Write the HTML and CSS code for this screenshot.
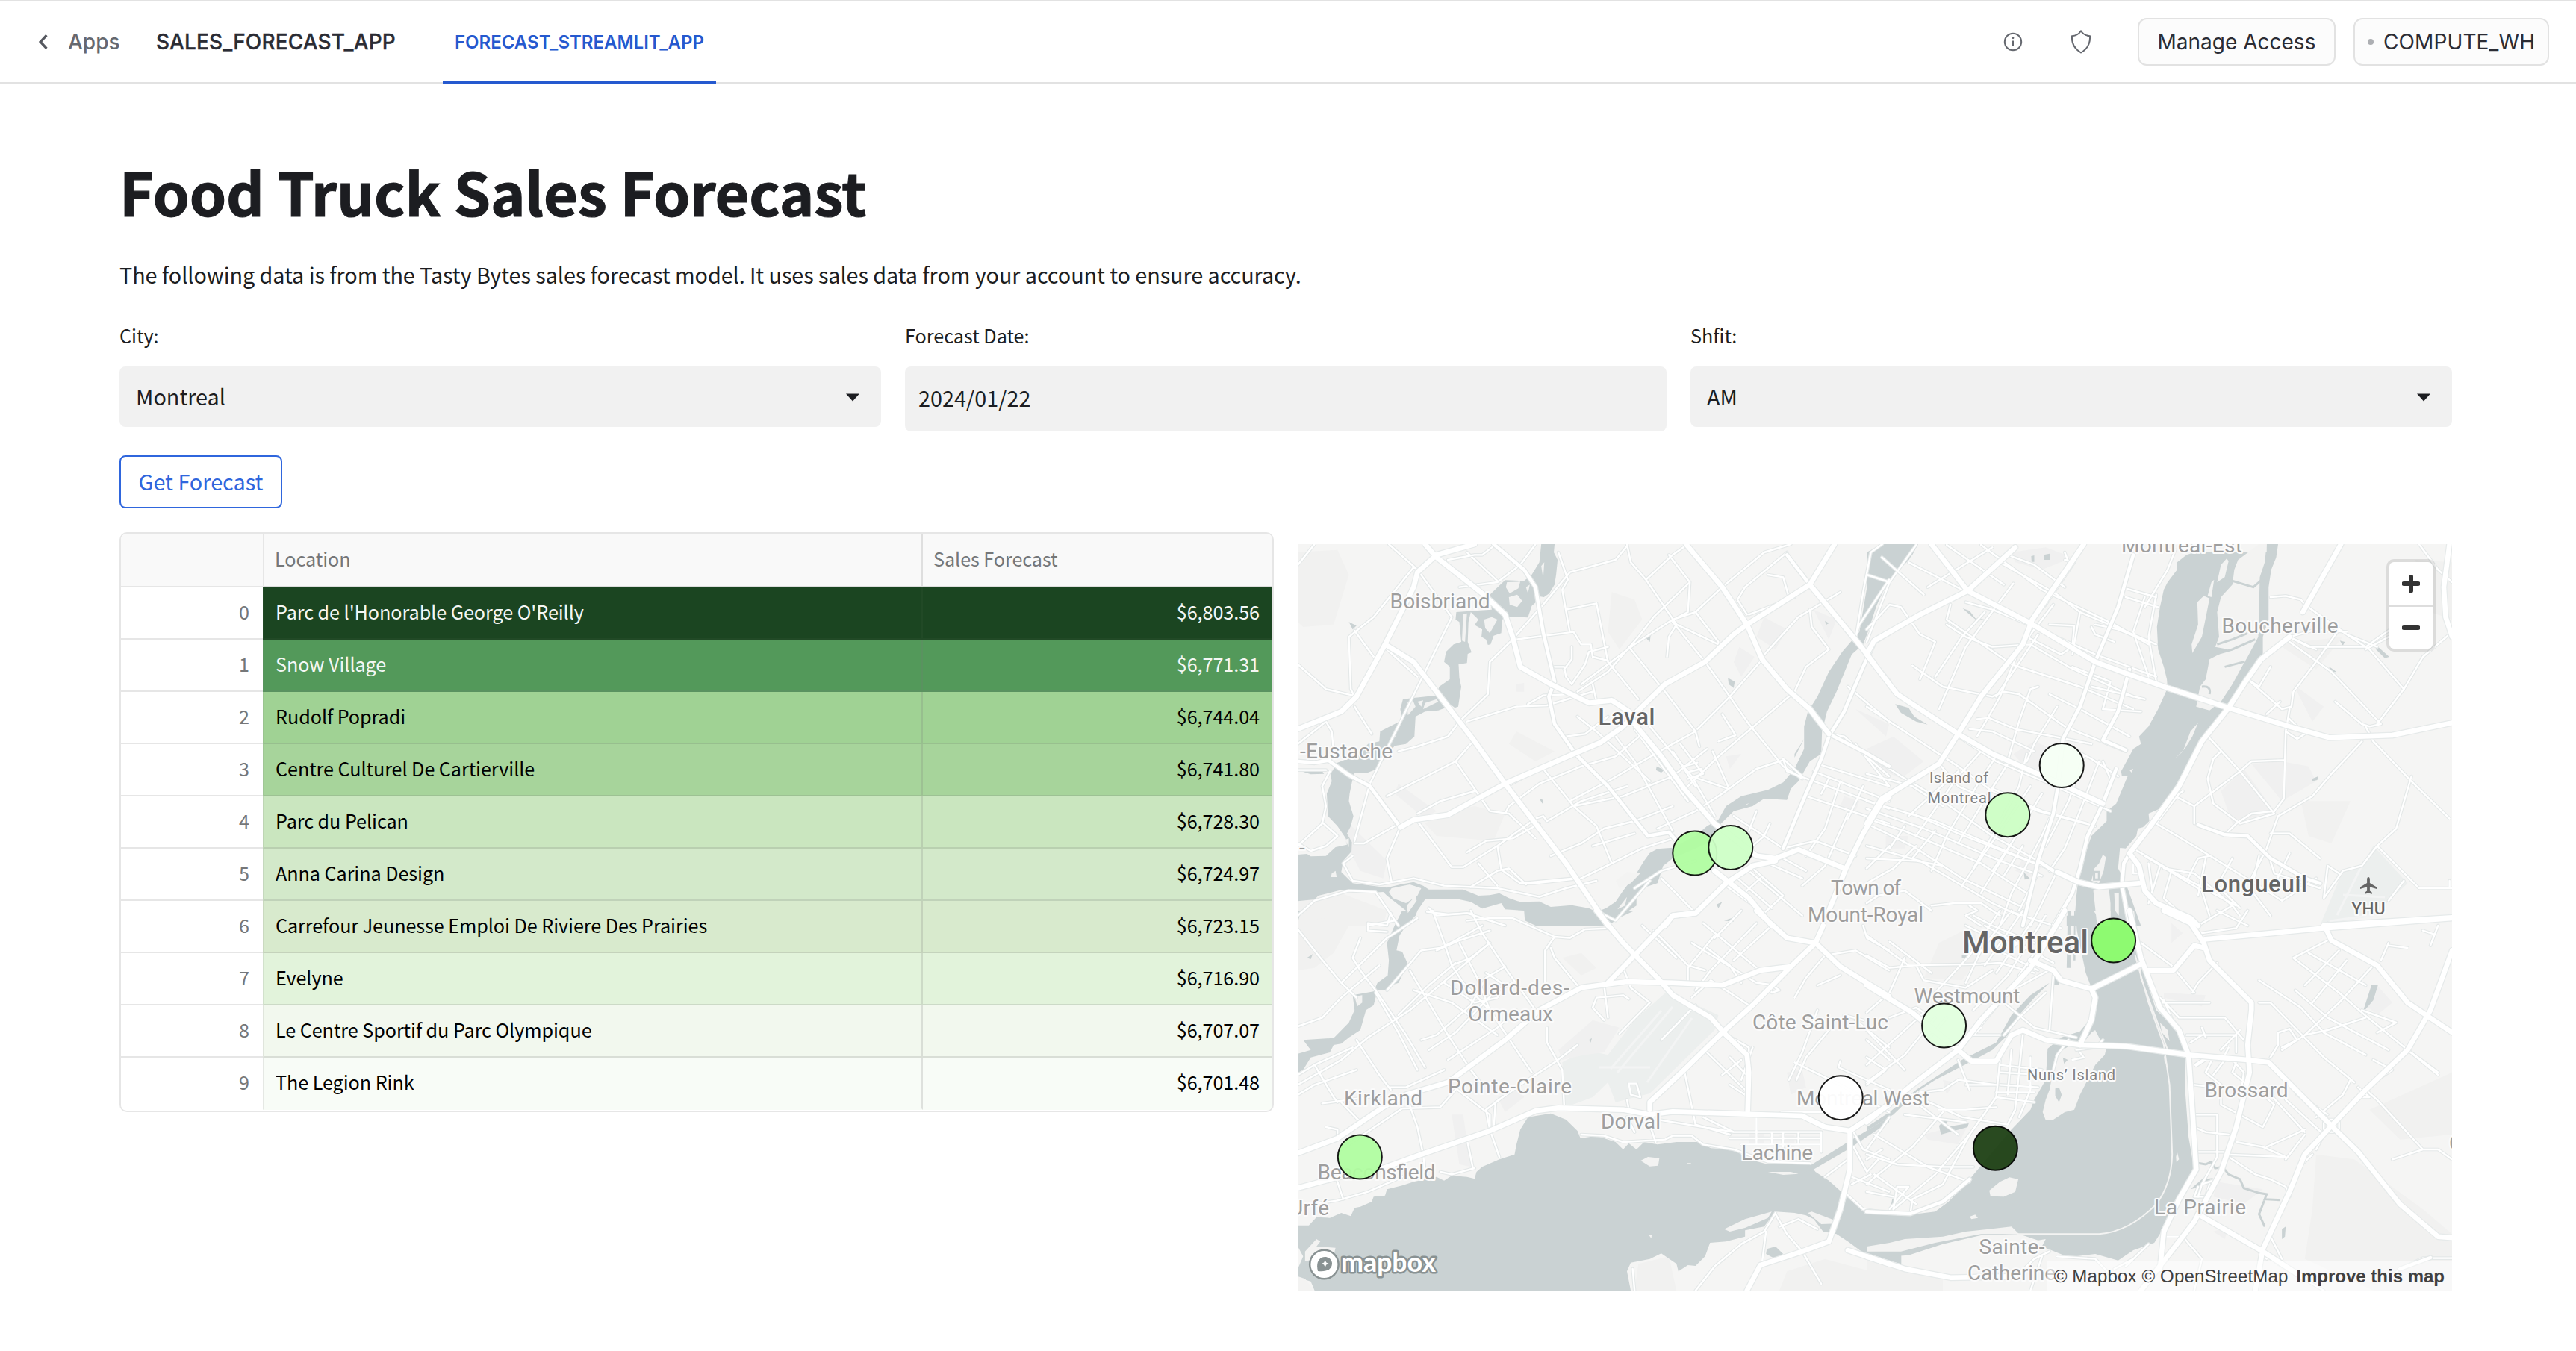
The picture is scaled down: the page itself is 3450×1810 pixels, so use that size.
FILE: index.html
```html
<!DOCTYPE html>
<html lang="en">
<head>
<meta charset="utf-8">
<title>Food Truck Sales Forecast</title>
<link rel="stylesheet" href="styles.css">
</head>
<body>
<header class="topbar">
  <nav class="crumbs">
    <a class="back"><svg class="chevron" viewBox="0 0 12 20"><path d="M10 2 2.5 10 10 18"/></svg><span class="apps">Apps</span></a>
    <span class="app-name">SALES_FORECAST_APP</span>
    <a class="tab"><span>FORECAST_STREAMLIT_APP</span></a>
  </nav>
  <div class="actions">
    <svg class="info" viewBox="0 0 28 28"><circle cx="14" cy="14" r="11.2"/><path d="M14 12.5v7.5"/><circle class="dot" cx="14" cy="8.8" r="1.4"/></svg>
    <svg class="shield" viewBox="0 0 28 32"><path d="M14 1.5c2.6 3.8 7 6.3 12 6.8.6 9.200-3.300 17.200-12 22.200C5.300 25.500 1.400 17.500 2 8.300 7 7.800 11.400 5.300 14 1.500z"/></svg>
    <button class="btn manage"><span>Manage Access</span></button>
    <button class="btn compute"><i></i><span>COMPUTE_WH</span></button>
  </div>
</header>

<main class="page">
  <h1><span>Food Truck Sales Forecast</span></h1>
  <p class="intro"><span>The following data is from the Tasty Bytes sales forecast model. It uses sales data from your account to ensure accuracy.</span></p>

  <section class="filters">
    <div class="field"><label>City:</label>
      <div class="select"><span>Montreal</span><svg class="caret" viewBox="0 0 20 11"><path d="M1 .5h18L10 10.500z"/></svg></div></div>
    <div class="field"><label>Forecast Date:</label>
      <div class="date"><span>2024/01/22</span></div></div>
    <div class="field"><label>Shfit:</label>
      <div class="select"><span>AM</span><svg class="caret" viewBox="0 0 20 11"><path d="M1 .5h18L10 10.500z"/></svg></div></div>
  </section>

  <button class="forecast"><span>Get Forecast</span></button>

  <section class="results">
    <div class="table">
      <div class="row head"><span class="idx"></span><span class="loc">Location</span><span class="val">Sales Forecast</span></div>
      <div class="row r0"><span class="idx">0</span><span class="loc">Parc de l'Honorable George O'Reilly</span><span class="val">$6,803.56</span></div>
      <div class="row r1"><span class="idx">1</span><span class="loc">Snow Village</span><span class="val">$6,771.31</span></div>
      <div class="row r2"><span class="idx">2</span><span class="loc">Rudolf Popradi</span><span class="val">$6,744.04</span></div>
      <div class="row r3"><span class="idx">3</span><span class="loc">Centre Culturel De Cartierville</span><span class="val">$6,741.80</span></div>
      <div class="row r4"><span class="idx">4</span><span class="loc">Parc du Pelican</span><span class="val">$6,728.30</span></div>
      <div class="row r5"><span class="idx">5</span><span class="loc">Anna Carina Design</span><span class="val">$6,724.97</span></div>
      <div class="row r6"><span class="idx">6</span><span class="loc">Carrefour Jeunesse Emploi De Riviere Des Prairies</span><span class="val">$6,723.15</span></div>
      <div class="row r7"><span class="idx">7</span><span class="loc">Evelyne</span><span class="val">$6,716.90</span></div>
      <div class="row r8"><span class="idx">8</span><span class="loc">Le Centre Sportif du Parc Olympique</span><span class="val">$6,707.07</span></div>
      <div class="row r9"><span class="idx">9</span><span class="loc">The Legion Rink</span><span class="val">$6,701.48</span></div>
    </div>

    <div class="map">
      <svg class="canvas" viewBox="0 0 1546 1000">
        <defs>
          <!-- Motorways, one group per map quadrant: NW, NE, SW, SE -->
          <g id="motorways" class="roads">
            <g transform="matrix(.5102 0 0 .33333 -8 -9)">
              <path d="M350 27 380 80 430 140 500 225 560 310 580 400 600 520 680 590 780 665 840 655 885 700 900 750 970 880 1030 1010 1110 1150 1220 1280 1270 1290 1330 1255 1450 1330"/>
              <path d="M16 770 130 700 170 640 245 430 320 200 330 140 380 70 480 27"/>
              <path d="M245 430 320 500 400 660 480 820 560 990 640 1150 720 1310 830 1560"/>
              <path d="M285 1165 320 1135 410 1115 560 990 740 870 810 825 870 760 900 710 980 590 1085 500 1160 390 1200 345 1360 190 1425 27"/>
              <path d="M1035 27 1130 200 1195 350 1235 490 1300 610 1360 690 1410 790"/>
              <path d="M1360 190 1490 430 1530 510"/>
              <path d="M1110 1340 1200 1450 1260 1560M980 1560 1000 1520 1060 1510 1140 1390 1210 1320 1270 1300"/>
              <path d="M1568 1045 1550 1060 1500 1190 1455 1330 1410 1500"/>
            </g>
            <g transform="matrix(.5102 0 0 .33333 762 -9)">
              <path d="M170 27 265 215 430 345 600 500 670 540 790 605 950 685 1110 760 1215 805 1380 795 1537 745"/>
              <path d="M390 40 265 215 140 310 20 415 0 470 80 630 240 790 330 870 450 950 620 1070"/>
              <path d="M570 27 435 330 410 430 300 640 240 790 190 910 40 1050 0 1150"/>
              <path d="M1245 27 1145 300M1110 400 1035 490 990 590 950 685 880 820 820 1000 740 1170 690 1270 715 1320 730 1420 760 1470 850 1530 870 1560"/>
              <path d="M1200 1560 1537 1528"/>
              <path d="M500 1345 555 1385 610 1405 715 1390"/>
              <path d="M1530 27 1515 200 1520 320 1537 400"/>
            </g>
            <g transform="matrix(.5102 0 0 .33333 -8 491)">
              <path d="M800 0 870 130 960 270 1000 340 1100 430 1140 500 1195 580 1200 650 1197 805"/>
              <path d="M16 975 120 915 240 790 300 740 410 690 560 520 650 400 760 310 880 285 1000 290 1130 300 1230 240 1310 225 1375 130 1395 60"/>
              <path d="M830 290 900 180 1000 20 1060 10"/>
              <path d="M1220 0 1300 110 1375 130 1440 225 1568 345"/>
              <path d="M16 1115 150 1060 240 1035 340 980 520 885 640 805 700 793 870 800 940 820 1000 808 1200 818 1340 825 1400 870 1465 885 1568 780"/>
              <path d="M940 800V770L1030 640 1130 490 1210 380 1310 225"/>
              <path d="M1465 885V1040L1440 1200 1410 1330 1340 1370 1230 1425 1195 1527"/>
              <path d="M1460 1365 1568 1420"/>
            </g>
            <g transform="matrix(.5102 0 0 .33333 762 491)">
              <path d="M0 850 120 700 240 560 275 605H340L380 500 410 480 470 520 560 540 680 545 845 580 1000 600 1055 610 1220 865 1290 970 1400 1180 1500 1310 1537 1315"/>
              <path d="M0 300 120 410 240 560 300 440 430 230 520 0"/>
              <path d="M430 200 490 240 510 280 590 315 720 215M590 315 600 350 590 440 560 540"/>
              <path d="M690 0 720 190 770 390 820 480 845 580 855 800 865 1040 820 1160 780 1290 770 1440"/>
              <path d="M780 0 850 50 885 130 900 200 1010 370 1010 400 1000 540 1005 650 970 870 930 1050 860 1250 720 1527"/>
              <path d="M890 115 1205 70 1537 30M1205 70 1220 120 1340 220 1420 370 1537 490"/>
              <path d="M1537 160 1480 400 1420 560 1310 720 1220 865 1150 980 1110 1130 1040 1360 1020 1527"/>
              <path d="M740 240H805L860 140 885 150M0 1390 100 1440 220 1475 400 1470M870 1220 1040 1370 1150 1480"/>
            </g>
          </g>
          <g id="primary" class="roads">
            <g transform="matrix(.5102 0 0 .33333 -8 -9)">
              <path d="M530 27 610 130 640 200 660 380 690 580 675 640 690 750 745 870 830 1000 935 1200 990 1185 1010 1220"/>
              <path d="M1568 385 1530 420 1500 520 1450 700 1410 800 1390 890 1350 1030 1290 1250"/>
              <path d="M100 900 150 955 205 1000 285 1165M1300 70 1360 190M1530 510 1568 580M1410 790 1500 860 1568 920M16 900 60 905 100 895"/>
            </g>
            <g transform="matrix(.5102 0 0 .33333 762 -9)">
              <path d="M700 70 660 280 600 500 560 680 515 810 500 1020 490 1110 450 1300 410 1560"/>
              <path d="M690 530 660 700 620 815 680 855M655 930 620 1070 580 1200 560 1330 540 1430 490 1560"/>
              <path d="M690 1270 675 1310 670 1400 690 1560M450 1300 500 1350"/>
              <path d="M870 1155 940 1195 1000 1200 1060 1290 1150 1370 1190 1390"/>
            </g>
            <g transform="matrix(.5102 0 0 .33333 762 491)">
              <path d="M865 620 890 595 1000 600M0 1210 115 1218 200 1170 270 1080M1480 1395 1400 1440"/>
            </g>
          </g>
          <!-- Streets -->
          <g id="streets" class="roads">
            <g transform="matrix(.5102 0 0 .33333 -8 -9)">
              <path d="M16 110 60 27M255 27 330 130 420 320M320 120 215 320 150 400 155 610 165 640M16 510 90 610 160 635M165 375 220 490M250 450 330 560M420 320 350 540 205 990 165 1220M16 830 90 740 105 780 110 860M90 735M165 680 210 790M580 410 520 500 515 630 440 740 410 800 330 840 280 860"/>
              <path d="M640 27 600 110 540 180 440 200M410 90 480 70 500 70 530 35M460 60 540 175M590 410 740 380 760 430H785L790 480 830 495M585 400 660 270 730 140 850 90 880 35M700 60 725 170 710 210 730 380M720 290 800 265 830 500 910 650M690 520 715 520 720 560 735 590 770 510 780 460 830 440M735 440 735 490 715 530"/>
              <path d="M880 27 890 100 930 170 1010 350 1120 430M930 170 1000 70 1040 27M990 70 1045 180 1040 300 990 340M750 620 830 540 910 400 950 320 1045 180M1000 330 1060 300 1130 200 1240 60 1310 27M1000 340 1085 500M1060 300 1120 420M760 590 900 430 1000 330"/>
              <path d="M885 440 980 620 1060 780 1070 840M985 480 990 400 1010 350M1085 500 1150 640 1200 750 1290 920 1340 970M1235 490 1150 640 1065 770M1235 480 1330 320 1440 220M1200 310 1320 240M1360 290 1365 360 1410 450 1350 520 1320 620 1120 880 1040 1000M1250 150 1290 160 1305 240M1195 310 1170 250 1190 200 1300 60"/>
              <path d="M1568 960 1450 800 1410 790M1460 600 1568 740M1568 170 1490 350 1480 400M1550 27 1520 60 1500 220 1480 410M1480 830 1568 1000M460 740 590 680 670 675 790 620M620 670 660 635 740 630M790 590 800 660M720 800 770 790 830 720M750 720 800 780 940 980M845 790 900 900 1000 1180M940 760 1050 960 1110 1120M900 770 1040 1060"/>
              <path d="M560 1110 570 1080 650 990 760 920 850 880 920 790M660 930 740 1080 800 1160 840 1310M250 1040 430 900 520 1100 570 1110 640 1210M430 900 470 830M480 1020 390 1060 330 1110M565 1000 640 940M730 1060 830 980 920 900 1000 830 1060 780M740 1080 870 1040 1000 960 1090 850M670 1140 760 1060 880 1000"/>
              <path d="M330 1140 420 1325 450 1325 540 1240 640 1130 660 1120 670 1140M460 1265 510 1220 580 1210 650 1150M680 1280 760 1230 820 1170 900 1140 1000 1080M790 1240 900 1190M600 1390 640 1390 760 1370 840 1310 920 1250 1000 1210M490 1310 540 1400M540 1240 550 1335 600 1390 740 1370M470 1405 540 1340 570 1330 615 1395"/>
              <path d="M285 1165 250 1290 262 1385M160 1280 135 1310 160 1380 230 1395 320 1370 400 1400 540 1410 650 1445 720 1410 800 1380M165 1230 190 1230 270 1160M16 1240 80 1150 90 1080 80 1000 100 940M80 1145 120 1200 90 1240 50 1260 16 1230M16 935 90 935M16 1520 60 1460 150 1420 220 1425 280 1560"/>
              <path d="M1000 860 1060 1000M1020 830 1080 950M960 870 1020 990M1030 920 1065 905M1035 945 1075 930M1040 970 1080 950M1105 860 1145 1000M1050 960 1145 1010M1130 710 1165 795 1120 820M1290 895 1220 930 1130 1030 1060 1100 960 1170M1340 960 1290 890 1300 940 1568 1090M1380 910 1568 1000M1370 940 1568 1060M1350 1040 1568 1150M1410 970 1390 1030M1440 980 1400 1170 1350 1280M1460 1110 1400 1320 1340 1400M1500 1000 1460 1130"/>
              <path d="M1160 1120 1290 1250 1375 1220 1480 1280M1220 1100 1200 1180M1255 1150 1240 1200 1210 1240M1250 1310 1340 1370M1210 1330 1290 1440 1240 1510 1140 1400M1170 1370 1260 1490M1200 1340 1340 1520M1290 1290 1350 1340M1180 1440 1230 1370M970 1370 1060 1510M900 1410 970 1340 1060 1300M800 1500 850 1540 940 1380M360 1490 380 1520 460 1510 560 1560M200 1560 270 1540"/>
            </g>
            <g transform="matrix(.5102 0 0 .33333 762 -9)">
              <path d="M0 150 60 180 30 300 0 420M60 180 130 30M40 80 150 230 M110 100 250 210M160 200 330 40M0 370 60 270 90 280 140 390 180 420 140 570M210 350 260 400 330 440 430 430 530 520 700 640M220 270 210 330 380 510 560 600 700 690M260 260 330 290 440 360 600 470 760 560"/>
              <path d="M210 30 360 190M300 30 460 210 650 350 740 430M350 100 500 230 560 300 760 430M370 70 440 110 520 200M385 185 260 440 190 690M310 300 250 400 180 560M490 270 400 450 350 640 290 800M450 390 340 640M520 90 545 100 470 270 430 330M530 100 520 60"/>
              <path d="M480 350 545 355 540 440 510 470 420 400M600 350 660 370 740 420M680 205 760 240M680 240 765 280M730 240 700 380 740 560M760 230 740 400 760 580M560 300 540 470M590 360 600 390 650 420M810 50 790 130 730 280"/>
              <path d="M120 515 200 600 330 640 360 620 400 630 520 760 680 860M290 730 320 725 390 770 590 830M480 630 560 690 690 800M540 520 590 550 640 580 620 690 720 700M590 600 730 650M450 600 430 610 400 740 370 900M500 680 440 830 420 900M0 680 140 820 240 920 330 1020 450 1100 600 1160M0 870 90 960 200 1060 330 1200 450 1300 550 1390M0 950 120 1000 200 1080M0 1060 180 1140 380 1270 510 1350M0 1090 150 1170 350 1300 460 1360M0 1130 100 1180 300 1310 430 1440M0 1150 120 1240 250 1370 400 1480M0 1240 140 1300 330 1470 400 1520M0 1290 130 1300 200 1320"/>
              <path d="M240 800 340 900 480 990 640 1100M270 770 330 780 440 860M420 870 400 1000 330 1200 280 1330M610 900 560 1100 520 1250 480 1340M570 880 530 1060 470 1240M620 900 640 970M540 850 590 890 660 960M340 880 300 970 210 1200 170 1340M300 860 240 960 130 1200M240 940 110 1120M370 910 300 1080 240 1230M430 1000 350 1180 250 1400M460 1030 400 1180 300 1430M190 910 240 1000 330 1060M330 1010 460 1100 580 1150M120 1110 240 1190 440 1310M0 1390 70 1330 130 1240M60 1240 0 1330"/>
              <path d="M480 1130 460 1200 380 1430 350 1560M450 1350 400 1500M500 1340 460 1470 430 1560M0 1470 30 1440 100 1420 170 1500M170 1480 230 1470 300 1470 350 1520M270 1480 290 1500 260 1520 300 1560M380 1230 330 1340 M410 1240 360 1360M180 1180 120 1290M100 1160 60 1250"/>
              <path d="M1110 420 1220 540 1350 750 1320 760 1300 750 1230 660M1110 400 1160 440 1310 440 1430 310M1150 270 1240 370 1320 450 1410 610 1340 750M1060 240 1100 235 1140 250 1150 270 1260 390 1340 440M1370 400 1310 450M1240 370 1170 520 1120 620 1115 680 1090 690 1000 570 1030 600 1060 520M1110 690 1100 780 1095 1050 1070 1100M1050 710 1085 660"/>
              <path d="M1410 610 1460 480 1537 380M1110 730 1150 790 1130 810 1100 780M1310 760 1330 820 1430 980 1530 1130M1430 960 1390 1170 1340 1240 1300 1320 1250 1340 1200 1450 1210 1320 1240 1350M1340 1240 1450 1410H1537M1370 1460 1410 1380M1530 1380V1410M1300 820 1220 950 1170 1040 1080 1120 1050 1250 1010 1370"/>
              <path d="M890 790 980 940 1070 1110 980 1150 910 1070 895 970 910 890 930 860M1095 895 1010 900 980 940 860 1080M1070 1100 1010 1110 970 1150 940 1195M860 1150 860 1080 810 1040 830 1020M820 1030 760 1150M760 1150 870 1250 1060 1430M700 1250 800 1340 970 1480M740 1310 750 1420M770 1320 740 1470M720 1350H700V1280M730 1280 880 1420 900 1520M840 1380 870 1290 900 1280M800 1340 780 1450 830 1520"/>
              <path d="M960 1480 860 1350 780 1330M890 1290 870 1440 M1060 1190 1110 1190 1190 1290M1030 1280 1010 1420 1060 1520M1060 1300 1070 1350 1190 1410M980 1490 920 1400 960 1290M1110 1270 1060 1430 1090 1460 1180 1370M870 1560 960 1480 980 1520M920 1500 1000 1560M1450 27 1500 130 1537 180"/>
              <path d="M1180 450 1110 400 1180 370 1260 380"/>
            </g>
            <g transform="matrix(.5102 0 0 .33333 -8 491)">
              <path d="M16 75 70 180 130 290 170 350M16 700 130 600 200 510 310 400 520 130M16 660 60 620 160 550M16 465 80 430 130 350 230 220 M130 290 250 110 330 30M180 110 160 190 180 240 220 320 300 500 350 630M260 10 250 60 200 50 200 80 250 85M370 0 400 130 420 220 450 290 520 400 590 560 630 650"/>
              <path d="M470 0 500 90 560 230 640 400M355 5 410 15 470 10M380 160 440 120 520 80M420 220 470 190 520 130M460 40 520 30 580 30 690 105 730 110 770 75 840 70M690 105 665 160 665 290M680 150 690 190 750 300M440 130 490 280 520 400M310 240 360 370 410 500 470 640 500 700M220 330 280 490 330 640"/>
              <path d="M320 320 420 370 540 500M280 420 360 300 430 210M340 520 380 500 470 380 510 270 560 225M510 250 560 300 540 350 480 370 400 290M250 320 340 160 390 150 430 120 500 60M360 560 430 490 530 330 580 290M410 600 480 530 540 470 590 400M16 740 60 700 170 640M80 775 150 760 240 740"/>
              <path d="M170 520 230 660 260 720M60 620 110 750 120 770M130 770 180 850M90 870 120 880 120 910M300 740 330 870 345 980 350 1050M430 720 390 790 290 795 130 960M260 710H300L400 640M520 880 510 800 580 720 690 610 750 540M670 470 670 530 710 640 715 780M410 690 520 820 520 880M530 880 535 770 600 700M460 920 475 1030M520 880 545 990M120 1090 135 1160M16 1190 120 1165 200 1130 290 1070M390 1050 420 1060 480 1035"/>
              <path d="M860 495 940 370M970 520 1060 380M820 300 830 430M820 440 790 390 800 350 870 340 885 355M870 230 890 310 940 370M950 80 1040 220 1085 240M920 60 1010 190M1080 50 1220 230M1110 100 1040 230V290M1090 150 1150 220 1180 290M1180 0 1110 110M1220 50 1100 240 1060 320M1260 60 1160 200M1270 300 1220 290 1050 130M1050 350 1100 280M1100 280 1200 380"/>
              <path d="M1090 570 1190 720M1150 590 1200 670M1210 550 1180 680M1180 600 1130 660M1130 490 1200 550 1200 600M1030 640 1060 860M885 695H905L915 750 890 740 885 695M880 760 885 800M1400 180 1480 160 1568 240M1400 180 1350 270 1320 350M1500 60 1510 110 1568 160M1380 300 1440 260M1260 300 1280 320 1260 330 1250 300"/>
              <path d="M1080 830 1160 890H1390V970M1150 915H1390M1180 940H1390M1220 830V940M1260 890V940M1290 890V950M1330 890V940M1285 810H1400L1480 820M960 840 1160 890M1060 860 1150 900M940 860 955 930M880 830 900 890M760 900 820 905 870 930 980 920 1000 905 1050 905 1080 940 1160 960 1250 1010 1360 1015"/>
              <path d="M1320 610 1440 700 1568 810M1380 400 1340 570 1305 680M1410 480 1350 590 1325 680M1440 605 1435 630 1568 720M1190 740 1150 700M1460 1000 1400 1070M1475 890 1500 960 1568 1000M1475 950 1510 1050 1540 1000M1470 1070 1568 1130M1470 1100 1520 1060M1450 1130 1500 1200 1568 1215M1270 1215 1240 1290 1180 1340 1110 1430 1060 1527M1270 1220 1300 1300 1340 1370 1390 1500M1280 1270 1330 1240 1380 1280M1245 1290 1235 1410M895 1440 900 1527M1480 440 1568 550M1450 420 1500 440"/>
            </g>
            <g transform="matrix(.5102 0 0 .33333 762 491)">
              <path d="M0 100 110 220 300 215 350 210 440 250M100 190 60 330 0 410M0 180 60 230 130 220 150 280 260 310 330 240M60 125 170 250M60 430 130 390 150 410 0 620M0 480 100 640M0 520 60 600M0 590 50 640 0 700M300 470 280 500 350 500M180 430 100 580 0 690M210 430 160 520"/>
              <path d="M350 0 270 180 180 330M380 0 300 160 260 290M410 0 310 220M440 30 340 250M470 20 370 260 280 400M500 40 400 260M280 20 330 60 440 130M260 60 300 90M310 60 490 210M370 0 510 70M350 100 460 180M330 150 450 240M470 330 400 430 360 500M490 260 480 480M300 460 370 330 490 230M360 370 440 470 550 510"/>
              <path d="M350 600 340 750 270 900 180 1060 70 1200M410 500 390 800 370 860M380 560 370 740M430 590 430 720 400 830M350 620 460 640M350 650 460 660M340 730H440M350 700 450 710M340 750 440 770M240 600 270 720M260 700 340 700 240 680 200 720 140 730M120 740 250 830 370 860M100 820 260 850M190 800 260 800 340 790M20 900 160 1030 270 1090M60 830 0 960M120 760 240 900"/>
              <path d="M0 980 80 1020 200 1030 280 1030M200 810 120 950 30 1060 0 1100M270 900 200 1100 120 1160 115 1218M70 1205 80 1110 110 1110 60 1200M0 1130 70 1150M0 1000 40 960M20 1060 130 1180M530 520 500 580 490 640M550 560 600 550 620 520M560 570 570 590 540 600"/>
              <path d="M720 130 800 220 860 330M855 330 870 290 920 210M880 90 970 70 1000 0M820 430H940M800 430 780 360M770 370 900 370M840 500H970V570M850 530 880 500M880 470 890 510M940 430 990 520M980 480 930 560M770 350 820 430M1030 370 1060 370 1130 480 1200 590 1280 690M1030 280 1140 390 1200 490 1310 580M1125 320 1210 430 1370 560M1120 190 1240 330 1300 410 1500 660M1160 170 1310 300M1210 120 1120 190"/>
              <path d="M1330 220 1240 370 1150 500 1090 560M1260 200 1170 370M1240 160 1150 300M1150 500 1210 480 1310 430M1060 590 1080 540 1080 490 1110 475 1130 520 1090 550M1300 400 1390 450 1340 490M1330 600 1380 640 1350 670M1270 680 1250 740 1180 830M1310 720 1340 760 1460 960H1500L1537 1000M1290 710 1320 750 1300 750M1380 1000 1460 960M1420 560 1500 650"/>
              <path d="M860 820H920V990L880 1100 870 1150M860 870 890 890 950 900M870 970H940M860 700 910 710M910 590 890 650 930 700 930 780 1040 870 1070 780 1040 740M940 600 910 660M960 600 990 650 980 760M970 610 960 650 1000 700M940 580 950 550M970 930 1040 950 1100 990M950 990 1020 1060 1060 1080 1100 1110 1110 1150M940 980 1100 990M1060 740 1150 890M1100 760 1200 900 1180 960M1130 740 1210 820"/>
              <path d="M1120 720 1180 790 1220 860M1150 900 1100 1000M1150 1010 1170 980M1200 840H1240V890H1200zM1050 950 1150 880M1370 130 1350 200M1370 140 1420 150M1460 80 1490 95M1500 60 1480 140M1190 80 1210 50M870 1110 860 1150 890 1150 900 1100M880 1100 920 1080M780 1310H830L780 1400M830 1310 880 1400 860 1527M680 1430 740 1340M650 1440 700 1400M400 1460 440 1400 480 1370M500 1390 600 1400 650 1480M460 1390 430 1527M1040 1370 1080 1420 1200 1527M1060 1310 1090 1400M1537 1397H1460L1400 1440 1370 1480M1015 1350 1050 1400M330 1200"/>
            </g>
          </g>
        </defs>

        <rect class="land" width="1546" height="1000"/>

        <!-- Parks, industrial areas, airfields -->
        <g class="patch">
          <g transform="matrix(.5102 0 0 .33333 -8 -9)">
            <path class="soft" d="M16 60 120 50 150 150 110 350 30 360 16 340zM840 220 900 250 920 330 860 450 830 380zM390 1110 480 1080 560 1110 530 1220 380 1200 350 1150zM16 1460 130 1430 250 1500 240 1560H16zM590 780 690 860 640 900 570 830z"/>
            <path d="M1240 320 1300 370 1270 450 1220 400zM1175 440 1215 480 1180 560 1160 500zM150 1150 250 1300 240 1370 180 1340 140 1220zM280 990 380 1100 350 1130 270 1030zM1370 290 1430 330 1410 410zM1480 690 1568 750 1560 800zM590 590 610 585 610 620 590 620zM1450 1040 1490 1060 1480 1100 1440 1080zM1140 880 1180 870 1150 930z"/>
          </g>
          <g transform="matrix(.5102 0 0 .33333 762 -9)">
            <path class="soft" d="M1140 1060 1270 1060 1220 1230 1160 1200zM1537 100 1440 90 1480 300 1537 330zM1080 430 1250 400 1180 530z"/>
            <path d="M0 850 70 800 150 900 90 970 20 920zM385 870 440 820 520 870 500 930 420 930zM930 1020 990 930 1070 1100 960 1150zM1010 910 1090 900 1160 920 1180 980 1090 1060zM1120 590 1200 680 1170 740zM50 1200 110 1200 100 1250 50 1250zM380 60 470 40 540 80 460 130 390 100zM410 1290 460 1320 440 1370 390 1340z"/>
            <path class="air" d="M1330 1240 1420 1390 1330 1520 1190 1560 1250 1340 1300 1320z"/>
          </g>
          <g transform="matrix(.5102 0 0 .33333 -8 491)">
            <path class="air" d="M985 325 1120 420 1110 480 940 735 850 770 830 690 790 750 720 790 710 610 770 560 830 580 900 440z"/>
            <path class="soft" d="M16 60 80 30 150 60 110 170 60 230 16 240zM710 190 760 170 800 230 760 260zM1300 1450 1400 1400 1568 1470V1527H1280zM910 1420 990 1390 1010 1527H900z"/>
            <path d="M700 560 790 440 860 470 820 570 770 580 710 600zM540 750 590 710 610 750 560 810zM420 820 450 820 470 1030 440 1020zM1300 650 1340 640 1350 710 1310 740zM1200 890H1240V940H1200zM1280 900H1320V970H1290z"/>
          </g>
          <g transform="matrix(.5102 0 0 .33333 762 491)">
            <path class="soft" d="M1180 980 1280 1000 1460 1200 1537 1300V1527H1330L1150 1400 1170 1200zM0 1400 200 1480V1527H0zM1320 800 1537 650V900L1400 920zM190 130 280 60 300 180 250 280 150 270z"/>
            <path d="M780 330 890 340 880 385 780 350zM150 900 270 850 240 940 160 920zM920 1090 1040 1120 990 1180 910 1150zM1310 380 1340 300 1380 370 1340 420zM800 50 830 90 800 130zM200 680 230 690 210 740zM910 1290 950 1270 940 1320z"/>
          </g>
        </g>

        <!-- Airport runways -->
        <g class="runway">
          <path d="m419 703 68-78M428 708l74-88M404 701h68M468 721l60-86M1392 497l38-76M1400 470l56 3M1382 505l58-8"/>
        </g>

        <!-- Rivers and lakes -->
        <g class="water">
          <g transform="matrix(.5102 0 0 .33333 -8 -9)">
            <path d="M655 27H690L688 60 698 90 694 150 690 190 676 225 662 240 648 236 640 262 630 275 620 322 570 318 552 330 550 385 530 395 522 430 515 432 510 410 498 400 500 370 480 352 490 330 470 300 464 340 462 420 472 462 462 468 460 505 438 510 440 565 445 600 437 680 428 685 420 675 385 695 350 700 325 720 322 800 300 830 270 838 240 895 225 930 200 945 165 945 158 985 152 1030 150 1060 162 1120 155 1160 145 1190 158 1225 157 1262 135 1300 130 1345 160 1390 250 1408 285 1395 320 1385 345 1400 360 1415 450 1415 490 1440 520 1438 545 1430 570 1450 600 1465 650 1463 680 1485 735 1478 780 1490 800 1505 825 1490 850 1465 870 1420 905 1350 925 1300 940 1268 960 1252 1000 1247 1060 1200 1090 1160 1120 1135 1140 1080 1180 1040 1250 1015 1290 985 1320 930 1345 850 1345 760 1355 700 1380 640 1410 540 1445 460 1490 380 1510 200 1530 100 1550 27H1644L1620 90 1570 170 1540 250 1515 370 1500 430 1470 470 1430 620 1405 700 1392 780 1390 870 1360 900 1330 980 1310 1010 1300 1055 1240 1050 1210 1080 1160 1100 1120 1160 1090 1230 1000 1290 975 1320 960 1390 930 1405 905 1440 905 1480 885 1500 850 1540 830 1560H640L612 1540 610 1500 560 1495 550 1470 500 1492 470 1465 440 1455 350 1455 330 1500 325 1520 300 1560H280L290 1510 300 1500 250 1440 240 1425 190 1430 130 1417 70 1440 60 1455 16 1462V1275L40 1272 50 1282 90 1280 115 1245 145 1235 142 1210 120 1160 95 1120 92 1030 105 980 102 950 120 905 180 870 200 830 230 820 232 780 270 750 290 735 285 690 292 650 320 645 380 635 387 600 415 570 415 520 400 500 405 460 425 430 445 420 440 340 430 330 432 300 480 295 525 290 520 230 560 172 610 175 630 150 650 100z"/>
            <path d="M150 340 170 355 160 370zM930 405 942 395 940 420zM1145 565 1163 580 1160 605 1147 590zM958 920 978 935 970 945 956 935zM650 1050 660 1055 658 1070zM1400 335 1410 345 1402 352zM1115 1475 1130 1465 1120 1490zM1320 870 1345 810 1320 885zM16 935 80 940 85 950 50 952zM1135 1540 1155 1530 1160 1545z"/>
          </g>
          <g transform="matrix(.5102 0 0 .33333 762 -9)">
            <path d="M0 60 40 27H135L120 70 60 160 30 260 0 365z"/>
            <path d="M840 70 860 60 1050 60 1050 27H1080L1075 80 1062 130 1055 200V330L1040 400V470L1000 570 960 660 930 720 880 810 830 950 800 1040 770 1090 740 1110 742 1140 725 1165 712 1170 708 1200 680 1250 665 1248 660 1330 680 1390 720 1560H545L550 1450 555 1380 570 1290 590 1200 630 1140 630 1100 655 1070 685 960 670 960 668 940 700 850 720 830 715 800 740 760 765 690 790 605 788 570 780 520 765 450 762 360 770 280 780 210 790 180 815 130 815 100z"/>
            <path d="M252 285 270 295 285 325 310 330 290 335 270 310zM75 670 110 685 125 720 160 752 130 740 90 705zM465 70 480 65 482 90 465 90zM432 75 440 72 440 98H433zM1335 430 1372 480 1360 485 1337 450zM1213 518 1233 540 1220 542zM1170 970 1185 960 1183 975 1168 980zM1242 415 1255 420 1250 435zM412 1345 428 1370 415 1375zM525 1520H550V1560H525z"/>
          </g>
          <g transform="matrix(.5102 0 0 .33333 -8 491)">
            <path d="M290 0H330L300 60 283 100 275 160 290 165 305 215 297 240 280 290 262 300 252 320 225 320 215 380 195 400 180 480 150 510 130 535 110 540 100 570 50 590 30 640 16 652V575L50 560 30 520 110 512 150 450 165 400 160 340 215 325 225 290 252 260 255 200 250 130 270 60z"/>
            <path d="M612 0H900L865 25 830 45 800 40 770 52 725 46 700 52 640 52 612 32zM16 0H25L16 45zM40 190 55 175 50 195z"/>
            <path d="M16 1265H45L65 1232 100 1235 130 1215 155 1228 165 1195 180 1190 210 1170 215 1150 245 1145 250 1120 290 1105 320 1090 380 1070 400 1085 420 1065 460 1070 480 1078 485 1050 500 1030 545 1000 585 980 590 940 600 880 620 830 680 815 720 840 750 885 758 915 800 905 850 930 870 960 885 935 905 960 925 930 960 940 1010 930 1070 930 1100 955 1160 960 1200 1000 1250 1020 1360 1020 1375 1050 1410 1085 1450 1140 1500 1210 1600 1220V1420L1509 1385 1460 1330 1430 1300 1395 1290 1370 1240 1350 1225 1320 1215 1270 1210 1240 1270 1190 1285 1190 1310 1140 1330 1098 1335 1085 1390 1060 1428 1040 1425 1015 1450 1010 1420 970 1378 940 1400 890 1415 880 1450 890 1527H800L815 1420 845 1420 865 1390 850 1527H60L50 1490 16 1475 V1440L30 1390 16 1350z"/>
            <path d="M1247 1360 1270 1350 1290 1380 1270 1400 1245 1380zM780 520 788 512 785 530zM1290 1040 1340 1045 1460 930 1568 830 1568 850 1460 960 1370 1040 1320 1062 1250 1050z"/>
          </g>
          <g transform="matrix(.5102 0 0 .33333 762 491)">
            <path d="M548 0 552 80 575 250 590 310 605 350 590 430 560 485 510 510 475 555 470 680 440 760 430 800 380 880 270 1080 240 1130 215 1170 180 1210 100 1225 60 1220 0 1215V1385L60 1390 110 1385 200 1340 300 1305 400 1300 450 1325 470 1320 460 1350 530 1393 600 1380 660 1406 700 1365 755 1335 790 1250 830 1130 860 1040 845 910 835 700 835 560 810 470 760 400 730 260 705 150 690 0z"/>
            <path d="M0 870 60 810 130 720 250 600 340 530 380 420 430 340 480 290 440 350 395 430 370 500 330 560 270 610 180 680 130 730 70 820 0 885zM528 0H535V230H525zM545 0H548V200H543zM490 260 508 250 505 300H490zM250 180 262 175 262 190 250 190zM190 865 208 835 215 840 205 870 268 855 265 870 195 900zM1305 395 1325 300 1342 300 1330 360 1308 400zM1090 1280 1100 1270 1098 1310 1090 1320zM850 1120 880 1080 910 1075 885 1095 875 1110z"/>
            <path class="creek" d="M870 1015 890 1020 905 1010 915 1035 935 1030 950 1060 980 1080 990 1115 1030 1135 1050 1140 1045 1160 1085 1163M1045 1160 1030 1220 1045 1270M65 1200 70 1160"/>
          </g>
        </g>

        <!-- Islands -->
        <g class="isle">
          <g transform="matrix(.5102 0 0 .33333 -8 -9)">
            <path d="M565 180 600 178 595 205 572 225 562 200zM570 240 592 230 605 255 592 280 572 270zM615 200 625 190 620 225zM450 310 460 305 455 420 447 415zM505 330 525 320 540 330 520 385 508 365zM655 115 663 100 660 165zM302 665 318 655 325 680 305 715zM330 660 345 655 340 680zM350 665 380 650 385 660 345 690zM262 1410 310 1395 340 1410 330 1440 300 1470 265 1450 255 1425zM850 1380 880 1345 915 1350 890 1390 860 1410zM855 1495 880 1445 875 1480zM105 1350 115 1340 118 1365 103 1365zM140 1215 150 1210 150 1245zM302 1480 325 1440 328 1460 305 1510zM265 800 275 795 270 805zM1190 1075 1200 1068 1195 1075z"/>
          </g>
          <g transform="matrix(.5102 0 0 .33333 762 -9)">
            <path d="M868 260 885 235 900 245 893 300 880 400 855 465 853 430 870 350zM905 180 912 170 905 240 895 235zM975 90 1030 27H1050L1045 100 1032 160 1028 400 1000 480 985 520 960 590 930 660 900 695 865 680 875 600 890 570 900 490 950 450 915 440 925 400 920 300 930 240 960 190 965 130zM930 110 945 85 950 95 940 160 920 180zM870 745 850 780 830 860 808 890 835 850 855 800zM620 1275 628 1285 622 1340 610 1390 590 1380 598 1330 610 1310zM595 1420 635 1400 640 1470 640 1560H605zM690 935 700 930 695 945zM650 1430 662 1430 662 1520 652 1500z"/>
          </g>
          <g transform="matrix(.5102 0 0 .33333 -8 491)">
            <path d="M916 1005 935 990 965 995 962 1025 940 1028zM1135 1280 1190 1240 1260 1210 1250 1235 1190 1275 1150 1290zM938 1305 945 1302 944 1318zM1038 1015H1048V1020H1038zM35 1370 65 1320 75 1330 65 1350 115 1355 112 1375 60 1400 35 1410zM1355 1215 1365 1210 1435 1250 1430 1258 1390 1260zM16 1470 35 1480 50 1510 55 1527H16zM165 345 185 340 185 370 172 385zM1250 1050 1310 1050 1330 1058 1290 1062z"/>
          </g>
          <g transform="matrix(.5102 0 0 .33333 762 491)">
            <path d="M600 480 610 510 628 560 625 580 600 620 580 680 560 740 545 800 520 810 490 840 470 842 462 810 470 760 480 720 490 640 495 580 530 545 570 530 590 490zM322 1125 350 1090 375 1072 398 1080 390 1130 360 1150 325 1148zM270 1230 285 1222 292 1235 275 1240zM812 990 815 970 820 1000 813 1010zM770 450 790 480 795 525 775 490zM595 0H640V40L610 30zM780 580 790 620 782 610zM0 1350 60 1335 100 1320 200 1310 260 1290 320 1280 380 1270 400 1300 300 1300 180 1335 90 1370 0 1370z"/>
            <path class="seaway" d="M705 180 740 370 780 540 795 700 802 980Q800 1100 760 1180 690 1290 610 1300H395M700 0 720 270 790 560"/>
          </g>
        </g>
        <g class="water"><g transform="matrix(.5102 0 0 .33333 762 491)"><path d="M495 715 505 710 512 740 505 770 495 745zM515 590 528 600 518 615z"/></g>
        <g transform="matrix(.5102 0 0 .33333 762 -9)"><path class="creek" d="M965 60 950 150 925 230M925 180 960 175 1015 200 1045 160M920 430 960 410 1000 385M915 470 960 450 1020 410M880 600Q905 595 900 630M940 520 990 500M597 1345H610V1375H597z"/></g></g>

        <use href="#streets" class="street-edge"/><use href="#streets" class="street-fill"/>
        <use href="#primary" class="primary-edge"/><use href="#primary" class="primary-fill"/>
        <use href="#motorways" class="motorway-edge"/><use href="#motorways" class="motorway-fill"/>

        <!-- Place names -->
        <g class="label">
          <text x="123.600" y="86" textLength="134">Boisbriand</text>
          <text x="3" y="287" textLength="124">-Eustache</text>
          <text x="2" y="416">-</text>
          <text x="714" y="470" textLength="94">Town of</text>
          <text x="683" y="506" textLength="155">Mount-Royal</text>
          <text x="1103" y="11" textLength="162">Montreal-Est</text>
          <text x="1237.500" y="119" textLength="156">Boucherville</text>
          <text x="204" y="603.500" textLength="160">Dollard-des-</text>
          <text x="228" y="638.500" textLength="114">Ormeaux</text>
          <text x="609" y="650" textLength="182">Côte Saint-Luc</text>
          <text x="201" y="736" textLength="166">Pointe-Claire</text>
          <text x="62" y="751.500" textLength="105">Kirkland</text>
          <text x="406" y="783" textLength="80">Dorval</text>
          <text x="668" y="751.500" textLength="178">Montreal West</text>
          <text x="594" y="825" textLength="96">Lachine</text>
          <text x="26.500" y="851" textLength="158">Beaconsfield</text>
          <text x="-11" y="898.500" textLength="53">Urfé</text>
          <text x="825.500" y="615" textLength="142">Westmount</text>
          <text x="1214.500" y="741" textLength="112">Brossard</text>
          <text x="1147" y="898" textLength="123">La Prairie</text>
          <text x="912.500" y="951" textLength="88">Sainte-</text>
          <text x="897" y="986" textLength="118">Catherine</text>
          <text x="1542" y="812">C</text>
        </g>
        <g class="label small">
          <text x="846" y="320" textLength="79">Island of</text>
          <text x="843.500" y="347" textLength="85">Montreal</text>
          <text x="977" y="718" textLength="118">Nuns’ Island</text>
        </g>
        <g class="label strong">
          <text x="402.500" y="242" textLength="76">Laval</text>
          <text x="1210" y="466" textLength="142">Longueuil</text>
          <text class="big" x="890" y="548" textLength="169">Montreal</text>
          <text class="code" x="1411.500" y="496" textLength="45">YHU</text>
        </g>
        <path class="plane" d="M1434 446c1.400 0 1.900 1.500 1.900 3v5l9.100 5.500v2.500l-9.100-2.800v5.300l3 2.300v2l-4.900-1.400-4.900 1.400v-2l3-2.300v-5.300l-9.100 2.800v-2.500l9.100-5.500v-5c0-1.500.5-3 1.900-3z"/>

        <!-- Forecast markers -->
        <g class="marker">
          <circle cx="531.800" cy="414" r="29.500" fill="#b0fda0"/>
          <circle cx="579.800" cy="406.500" r="29.500" fill="#ceffc6"/>
          <circle cx="1023.200" cy="296.500" r="29.500" fill="#f5fff4"/>
          <circle cx="950.800" cy="362.700" r="29.500" fill="#ccfec4"/>
          <circle cx="1092.600" cy="531" r="29.500" fill="#8afc6c"/>
          <circle cx="865.600" cy="645" r="29.500" fill="#e2ffde"/>
          <circle cx="934.400" cy="809.300" r="29.500" fill="#1e4014"/>
          <circle cx="727.200" cy="741.700" r="29.500" fill="#ffffff"/>
          <circle cx="83.300" cy="821" r="29.500" fill="#b0fda0"/>
        </g>
        <g class="brand">
          <circle class="ring" cx="35.400" cy="965" r="20.500"/>
          <circle class="disc" cx="35.400" cy="965" r="18"/>
          <path class="drop" d="M27 974c-3-12 2-19 9.500-19 5.500 0 9.500 4 9.500 9 0 7.500-8 11.500-19 10z"/>
          <path class="spark" d="m36.700 959 1.500 3.500 3.500 1.500-3.500 1.500-1.500 3.500-1.500-3.500-3.500-1.500 3.500-1.500z"/>
          <text x="58" y="975" textLength="127">mapbox</text>
        </g>
      </svg>
      <div class="zoom">
        <button><svg viewBox="0 0 24 24"><path d="M12 2.500v19M2.500 12h19"/></svg></button>
        <button><svg viewBox="0 0 24 24"><path d="M2.500 12h19"/></svg></button>
      </div>
      <div class="credit"><span>© Mapbox</span> <span>© OpenStreetMap</span> <b>Improve this map</b></div>
    </div>
  </section>
</main>
</body>
</html>
```
FILE: styles.css
```css
* { box-sizing: border-box; }
body {
  margin: 0;
  background: #fff;
  color: #1c1d21;
  font-family: "Noto Sans CJK SC", "Noto Sans", sans-serif;
  font-size: 28.8px;
}
button { font: inherit; margin: 0; padding: 0; background: none; border: 0; }

/* Top bar */
.topbar {
  height: 112px;
  border-top: 2px solid #e2e2e2;
  border-bottom: 2px solid #e2e2e2;
  display: flex;
  justify-content: space-between;
  font-family: Inter, sans-serif;
  font-size: 28px;
}
.crumbs { display: flex; align-items: center; padding-left: 51px; }
.back { display: flex; align-items: center; gap: 27px; width: 158px; color: #65686f; font-weight: 500; }
.chevron { width: 14px; height: 22px; fill: none; stroke: #55585f; stroke-width: 3; }
.apps { margin-left: -1px; }
.app-name { width: 384px; color: #2b2c34; font-weight: 500; letter-spacing: .12px; -webkit-text-stroke: .3px #2b2c34; }
.tab {
  width: 366px;
  height: 110px;
  margin-bottom: -2px;
  padding-top: 2px;
  display: flex;
  align-items: center;
  justify-content: center;
  border-bottom: 4px solid #2559cf;
  color: #2559cf;
  font-size: 24px;
  font-weight: 600;
  align-self: flex-start;
}
.actions { display: flex; align-items: center; padding-right: 36px; }
.info { width: 28px; height: 28px; margin-right: 63px; fill: none; stroke: #65686f; stroke-width: 2; }
.info .dot { fill: #65686f; stroke: none; }
.shield { width: 28px; height: 32px; margin-right: 62px; fill: none; stroke: #65686f; stroke-width: 2; }
.btn {
  height: 64px;
  border: 2px solid #e2e2e2;
  border-radius: 12px;
  background: #fcfcfc;
  color: #2b2c34;
  display: flex;
  align-items: center;
  justify-content: center;
}
.manage { width: 265px; margin-right: 24px; }
.compute { width: 262px; gap: 13px; letter-spacing: .12px; }
.compute i { width: 8px; height: 8px; border-radius: 50%; background: #adafb3; }

/* Page */
.page { padding: 91px 166px 0 160px; }
h1 {
  margin: 0;
  font-size: 79px;
  font-weight: 700;
  line-height: 106px;
  letter-spacing: -.2px;
  -webkit-text-stroke: 1.2px #1c1d21;
}
.intro { margin: 33px 0 36px; line-height: 51px; letter-spacing: -.075px; }
.filters { display: grid; grid-template-columns: repeat(3, 1fr); gap: 32px; align-items: start; }
.field { display: flex; flex-direction: column; gap: 22px; }
.field label { font-size: 25.2px; line-height: 40px; }
.select, .date {
  display: flex;
  align-items: center;
  justify-content: space-between;
  height: 81px;
  padding: 0 28px 1px 22px;
  border-radius: 8px;
  background: #f1f1f1;
  line-height: 1;
}
.date { height: 87px; padding-left: 18px; padding-bottom: 2px; }
.caret { width: 20px; height: 11px; fill: #1c1d21; position: relative; top: 1px; }
.forecast {
  display: flex;
  align-items: center;
  justify-content: center;
  width: 218px;
  height: 71px;
  margin: 32px 0;
  padding-bottom: 3px;
  border: 2px solid #2f66dd;
  border-radius: 8px;
  color: #2f66dd;
}
.results { display: grid; grid-template-columns: 1fr 1fr; gap: 32px; align-items: start; }

/* Forecast table */
.table {
  border: 2px solid #e6e6e6;
  border-radius: 10px;
  overflow: hidden;
  padding-bottom: 1px;
  font-size: 25.2px;
  letter-spacing: -.07px;
}
.row { display: grid; grid-template-columns: 190px 884px 1fr; height: 70px; color: #000; }
.row span {
  display: flex;
  align-items: center;
  padding: 0 16px 2px;
  line-height: 1;
  border-right: 2px solid rgba(120, 120, 120, .2);
  border-bottom: 2px solid rgba(120, 120, 120, .2);
}
.row .idx { justify-content: flex-end; color: #757779; background: #fff; padding-right: 18px; border-right: 0; border-bottom-color: #e6e6e6; }
.row .loc { border-left: 2px solid rgba(120, 120, 120, .15); padding-left: 15px; }
.row .val { justify-content: flex-end; border-right: 0; padding-right: 17px; }
.row.head { height: 72px; background: #f9f9f9; color: #757779; }
.row.head .idx { background: none; }
.row.head .loc { padding-left: 14px; }
.row.head .val { justify-content: flex-start; padding-left: 14px; }
.r9 span, .r9 .idx { border-bottom-color: transparent; }
.row.r0, .row.r1 { color: #f4f7f4; }
.r0 .loc, .r0 .val { background: #1b4521; border-color: rgba(60, 90, 60, .2); }
.r1 .loc, .r1 .val { background: #53995a; }
.r2 .loc, .r2 .val { background: #a0d294; }
.r3 .loc, .r3 .val { background: #a7d49b; }
.r4 .loc, .r4 .val { background: #cae6bf; }
.r5 .loc, .r5 .val { background: #d3e9ca; }
.r6 .loc, .r6 .val { background: #d8eacd; }
.r7 .loc, .r7 .val { background: #e2f3db; }
.r8 .loc, .r8 .val { background: #f2f8ee; }
.r9 .loc, .r9 .val { background: #f8fcf7; }

/* Map */
.map { position: relative; height: 1000px; margin-top: 16px; overflow: hidden; }
.canvas { display: block; width: 1546px; height: 1000px; }
.land { fill: #f5f5f4; }
.patch { fill: #f0f0f0; }
.patch .soft { fill: #f1f1f0; }
.patch .air { fill: #ecefee; }
.runway { fill: none; stroke: #f3f4f4; stroke-width: 3; }
.water { fill: #cad2d3; }
.isle { fill: #f3f3f2; }
.creek { fill: none; stroke: #cad2d3; stroke-width: 3; vector-effect: non-scaling-stroke; }
.seaway { fill: none; stroke: #f3f3f2; stroke-width: 2; vector-effect: non-scaling-stroke; }
.roads { fill: none; stroke-linejoin: round; stroke-linecap: round; }
.roads path { vector-effect: non-scaling-stroke; }
.street-edge { stroke: #e4e8e8; stroke-width: 4.6px; }
.street-fill { stroke: #fff; stroke-width: 2.4px; }
.primary-edge { stroke: #e4e8e8; stroke-width: 7px; }
.primary-fill { stroke: #fff; stroke-width: 4.5px; }
.motorway-edge { stroke: #e6eaea; stroke-width: 9px; }
.motorway-fill { stroke: #fff; stroke-width: 6.5px; }
.label {
  font-family: Roboto, sans-serif;
  font-size: 28px;
  fill: #9e9e9e;
  stroke: #fbfbfb;
  stroke-width: 4px;
  stroke-linejoin: round;
  paint-order: stroke;
}
.label.small { font-size: 20px; fill: #828282; }
.label.strong { font-size: 31px; font-weight: 500; fill: #666; }
.label .big { font-size: 42px; }
.label .code { font-size: 22.5px; }
.plane { fill: #666; }
.marker { stroke: #000; stroke-width: 2px; fill-opacity: .95; stroke-opacity: .9; }
.brand .ring { fill: #899293; }
.brand .disc { fill: #fff; }
.brand .drop { fill: #899293; }
.brand .spark { fill: #fff; }
.brand text {
  font-family: Lato, sans-serif;
  font-size: 36px;
  font-weight: 700;
  fill: #fff;
  stroke: #899293;
  stroke-width: 5px;
  stroke-linejoin: round;
  paint-order: stroke;
}
.zoom {
  position: absolute;
  top: 24px;
  right: 26px;
  width: 58px;
  border-radius: 6px;
  background: #fff;
  box-shadow: 0 0 0 4px rgba(0, 0, 0, .1);
}
.zoom button { display: flex; align-items: center; justify-content: center; width: 58px; height: 58px; }
.zoom button + button { border-top: 2px solid #ddd; }
.zoom svg { width: 24px; height: 24px; stroke: #333; stroke-width: 6px; stroke-linecap: round; }
.credit {
  position: absolute;
  right: 0;
  bottom: 0;
  height: 40px;
  padding: 0 10px;
  background: rgba(255, 255, 255, .5);
  color: #404040;
  font: 24px/42px "Liberation Sans", Arial, sans-serif;
  letter-spacing: .15px;
  white-space: nowrap;
}
.credit b { margin-left: 4px; letter-spacing: 0; }
```
